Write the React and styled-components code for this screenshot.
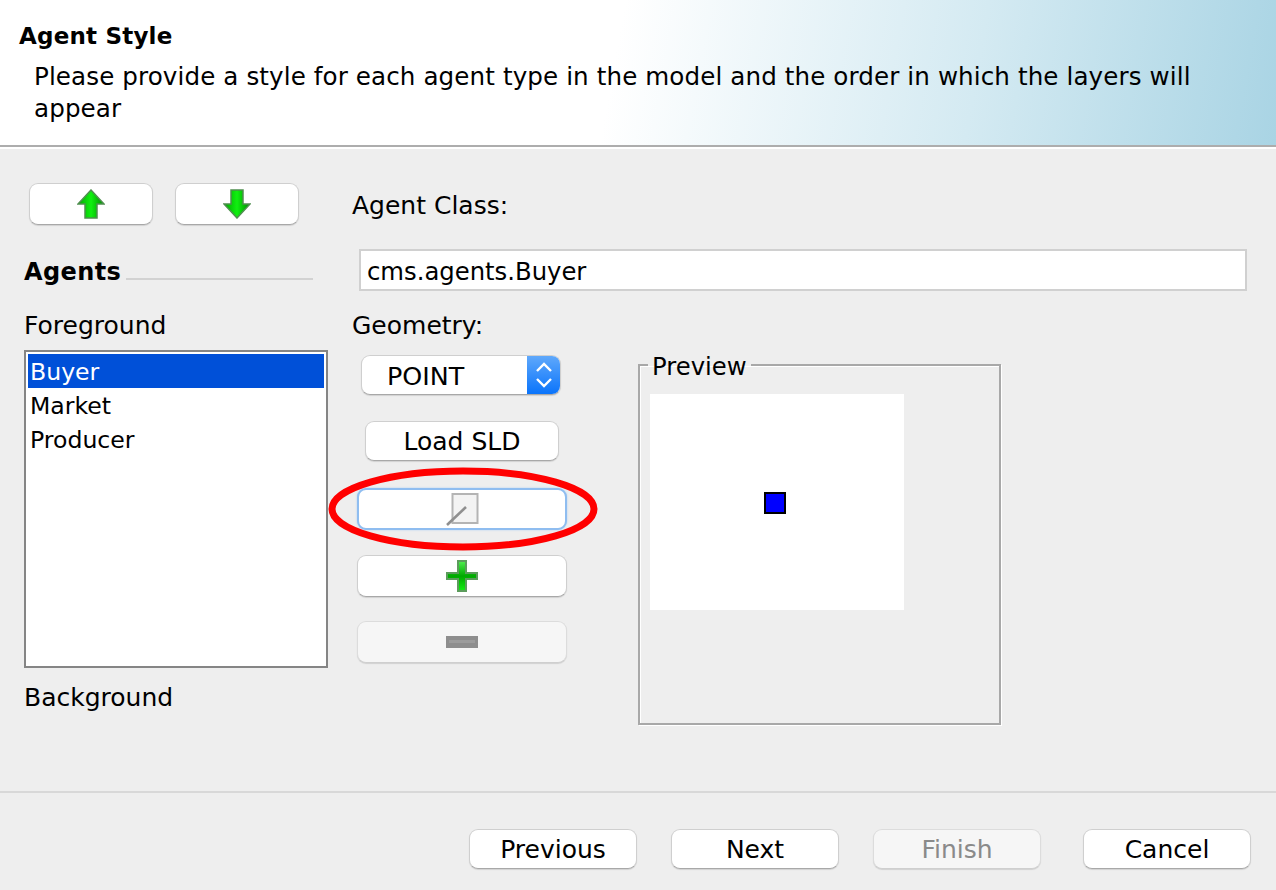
import styled, { createGlobalStyle } from "styled-components";

const GlobalStyle = createGlobalStyle`
  html, body {
    margin: 0;
    padding: 0;
    background: #eeeeee;
    font-family: "DejaVu Sans", "Liberation Sans", sans-serif;
    color: #000;
  }
  * {
    box-sizing: border-box;
  }
`;

const Page = styled.div`
  width: 1276px;
  height: 890px;
  display: flex;
  flex-direction: column;
  overflow: hidden;
  background: #eeeeee;
`;

const Header = styled.header`
  height: 149px;
  padding: 20px 0 0 19px;
  background: linear-gradient(100deg, #ffffff 0%, #ffffff 48%, #d4eaf2 76%, #a9d4e4 100%);
  box-shadow: inset 0 -2px 0 #ffffff, inset 0 -4px 0 #adadad;
`;

const Title = styled.h1`
  margin: 0 0 9px;
  font-size: 23px;
  line-height: 32px;
  font-weight: bold;
  letter-spacing: 0.2px;
`;

const Description = styled.p`
  margin: 0;
  padding-left: 15px;
  width: 1200px;
  font-size: 24.6px;
  line-height: 32px;
  letter-spacing: 0.1px;
`;

const Main = styled.main`
  height: 642px;
  display: flex;
  padding: 34px 0 0 24px;
`;

const LeftColumn = styled.section`
  width: 304px;
  display: flex;
  flex-direction: column;
`;

const ArrowRow = styled.div`
  display: flex;
  gap: 22px;
  padding-left: 5px;
`;

const Button = styled.button`
  width: ${(p) => p.$width}px;
  height: ${(p) => p.$height || 42}px;
  padding: 0;
  display: flex;
  align-items: center;
  justify-content: center;
  font-family: inherit;
  font-size: 25px;
  color: ${(p) => (p.disabled ? "#8a8a8a" : "#000")};
  background: ${(p) => (p.disabled ? "#f6f6f6" : "#fff")};
  border: 1px solid ${(p) => (p.disabled ? "#dcdcdc" : "#cfcfcf")};
  border-bottom-color: ${(p) => (p.disabled ? "#cfcfcf" : "#a8a8a8")};
  border-radius: 9px;
  box-shadow: 0 1px 1px rgba(0, 0, 0, 0.12);
`;

const SectionTitle = styled.div`
  margin-top: 31px;
  display: flex;
  align-items: flex-end;
  gap: 5px;
  font-size: 24px;
  line-height: 32px;
  font-weight: bold;
  letter-spacing: 0.4px;

  &::after {
    content: "";
    flex: 1;
    height: 2px;
    margin: 0 15px 8px 0;
    background: #d2d2d2;
  }
`;

const Label = styled.div`
  font-size: 25px;
  line-height: 32px;
`;

const ForegroundLabel = styled(Label)`
  margin-top: 22px;
`;

const List = styled.ul`
  list-style: none;
  margin: 8px 0 0;
  padding: 2px;
  width: 304px;
  height: 318px;
  background: #fff;
  border: 2px solid #858585;
`;

const ListItem = styled.li`
  height: 34px;
  padding: 1px 0 0 2px;
  font-size: 23.6px;
  line-height: 34px;
  color: ${(p) => (p.$selected ? "#fff" : "#000")};
  background: ${(p) => (p.$selected ? "#0050d8" : "transparent")};
`;

const BackgroundLabel = styled(Label)`
  margin-top: 14px;
`;

const RightColumn = styled.section`
  margin-left: 24px;
  width: 900px;
  display: flex;
  flex-direction: column;
`;

const ClassLabel = styled(Label)`
  margin-top: 7px;
`;

const ClassField = styled.div`
  margin: 27px 0 0 7px;
  width: 888px;
  height: 42px;
  padding-left: 6px;
  font-size: 24.3px;
  line-height: 42px;
  background: #fff;
  border: 2px solid #d0d0d0;
`;

const GeometryLabel = styled(Label)`
  margin-top: 19px;
`;

const GeometryRow = styled.div`
  margin-top: 13px;
  display: flex;
`;

const Controls = styled.div`
  margin-left: 5px;
  width: 210px;
  display: flex;
  flex-direction: column;
  align-items: center;
`;

const Select = styled.div`
  align-self: flex-start;
  margin-left: 4px;
  width: 200px;
  height: 40px;
  display: flex;
  background: #fff;
  border: 1px solid #cfcfcf;
  border-bottom-color: #a8a8a8;
  border-radius: 9px;
  box-shadow: 0 1px 1px rgba(0, 0, 0, 0.12);
  overflow: hidden;
`;

const SelectValue = styled.span`
  flex: 1;
  padding-left: 25px;
  font-size: 25.4px;
  line-height: 40px;
`;

const SelectCaret = styled.span`
  width: 33px;
  display: flex;
  align-items: center;
  justify-content: center;
  background: linear-gradient(#5fa8fb, #0a74fb);
`;

const LoadButton = styled(Button)`
  margin-top: 26px;
`;

const FocusWrap = styled.div`
  position: relative;
  margin-top: 27px;
`;

const FocusButton = styled(Button)`
  border: 2px solid #8fbdf0;
  box-shadow: 0 0 2px #a9cdf5;
`;

const Ellipse = styled.svg`
  position: absolute;
  left: -29px;
  top: -22px;
  pointer-events: none;
`;

const AddButton = styled(Button)`
  margin-top: 25px;
`;

const RemoveButton = styled(Button)`
  margin-top: 24px;
`;

const PreviewBox = styled.fieldset`
  margin: -7px 0 0 71px;
  padding: 0 0 0 10px;
  width: 363px;
  height: 377px;
  border: 2px solid #a8a8a8;
  box-shadow: inset 1px 1px 0 #fff, 1px 1px 0 #fff;
`;

const PreviewLegend = styled.legend`
  margin-left: -2px;
  padding: 4px 4px 0;
  font-size: 24.3px;
  line-height: 30px;
`;

const PreviewCanvas = styled.div`
  margin-top: 12px;
  width: 254px;
  height: 216px;
  display: flex;
  padding: 98px 0 0 114px;
  background: #fff;
`;

const Swatch = styled.div`
  width: 22px;
  height: 22px;
  background: #0000ff;
  border: 2px solid #000;
`;

const Footer = styled.footer`
  height: 99px;
  display: flex;
  justify-content: flex-end;
  gap: 34px;
  padding: 36px 25px 0 0;
  border-top: 2px solid #d8d8d8;
`;

const CancelButton = styled(Button)`
  margin-left: 8px;
`;

function ArrowIcon({ down }) {
  const id = down ? "arrowDown" : "arrowUp";
  return (
    <svg width="28" height="30" viewBox="0 0 28 30" style={down ? { transform: "scaleY(-1)" } : undefined}>
      <defs>
        <linearGradient id={id} x1="0" x2="1" y1="0" y2="0">
          <stop offset="0" stopColor="#00a800" />
          <stop offset="0.5" stopColor="#10f010" />
          <stop offset="1" stopColor="#008c00" />
        </linearGradient>
      </defs>
      <path
        d="M14 1 L27 15 L20 15 L20 29 L8 29 L8 15 L1 15 Z"
        fill={`url(#${id})`}
        stroke="#4f8f4f"
        strokeWidth="1.5"
      />
    </svg>
  );
}

function PlusIcon() {
  return (
    <svg width="32" height="32" viewBox="0 0 32 32">
      <defs>
        <linearGradient id="plusFill" x1="0" x2="0" y1="0" y2="1">
          <stop offset="0" stopColor="#50f050" />
          <stop offset="0.5" stopColor="#00a800" />
          <stop offset="1" stopColor="#10f010" />
        </linearGradient>
      </defs>
      <path
        d="M12 1 H20 V13 H31 V19 H20 V31 H12 V19 H1 V13 H12 Z"
        fill="url(#plusFill)"
        stroke="#5c9c5c"
        strokeWidth="2"
      />
    </svg>
  );
}

function MinusIcon() {
  return (
    <svg width="32" height="12" viewBox="0 0 32 12">
      <rect width="32" height="12" fill="#8e8e8e" />
      <rect x="3" y="4" width="26" height="3" fill="#9c9c9c" />
    </svg>
  );
}

function EditIcon() {
  return (
    <svg width="34" height="34" viewBox="0 0 34 34">
      <rect x="7.5" y="2" width="25" height="29" fill="#f3f3f3" stroke="#b4b4b4" strokeWidth="2" />
      <path d="M2 33 L21 15" stroke="#8f8f8f" strokeWidth="2.6" />
    </svg>
  );
}

function CaretIcon() {
  return (
    <svg width="18" height="28" viewBox="0 0 18 28" fill="none" stroke="#fff" strokeWidth="2.4">
      <path d="M2 10 L9 3 L16 10" />
      <path d="M2 18 L9 25 L16 18" />
    </svg>
  );
}

export default function App() {
  return (
    <Page>
      <GlobalStyle />
      <Header>
        <Title>Agent Style</Title>
        <Description>
          Please provide a style for each agent type in the model and the order in which the layers will appear
        </Description>
      </Header>
      <Main>
        <LeftColumn>
          <ArrowRow>
            <Button $width={124}>
              <ArrowIcon />
            </Button>
            <Button $width={124}>
              <ArrowIcon down />
            </Button>
          </ArrowRow>
          <SectionTitle>Agents</SectionTitle>
          <ForegroundLabel>Foreground</ForegroundLabel>
          <List>
            <ListItem $selected>Buyer</ListItem>
            <ListItem>Market</ListItem>
            <ListItem>Producer</ListItem>
          </List>
          <BackgroundLabel>Background</BackgroundLabel>
        </LeftColumn>
        <RightColumn>
          <ClassLabel>Agent Class:</ClassLabel>
          <ClassField>cms.agents.Buyer</ClassField>
          <GeometryLabel>Geometry:</GeometryLabel>
          <GeometryRow>
            <Controls>
              <Select>
                <SelectValue>POINT</SelectValue>
                <SelectCaret>
                  <CaretIcon />
                </SelectCaret>
              </Select>
              <LoadButton $width={194} $height={40}>
                Load SLD
              </LoadButton>
              <FocusWrap>
                <FocusButton $width={210}>
                  <EditIcon />
                </FocusButton>
                <Ellipse width="270" height="86" viewBox="0 0 270 86">
                  <ellipse cx="135" cy="43" rx="131" ry="38" fill="none" stroke="#ff0000" strokeWidth="7" />
                </Ellipse>
              </FocusWrap>
              <AddButton $width={210}>
                <PlusIcon />
              </AddButton>
              <RemoveButton $width={210} disabled>
                <MinusIcon />
              </RemoveButton>
            </Controls>
            <PreviewBox>
              <PreviewLegend>Preview</PreviewLegend>
              <PreviewCanvas>
                <Swatch />
              </PreviewCanvas>
            </PreviewBox>
          </GeometryRow>
        </RightColumn>
      </Main>
      <Footer>
        <Button $width={168} $height={40}>Previous</Button>
        <Button $width={168} $height={40}>Next</Button>
        <Button $width={168} $height={40} disabled>Finish</Button>
        <CancelButton $width={168} $height={40}>Cancel</CancelButton>
      </Footer>
    </Page>
  );
}
